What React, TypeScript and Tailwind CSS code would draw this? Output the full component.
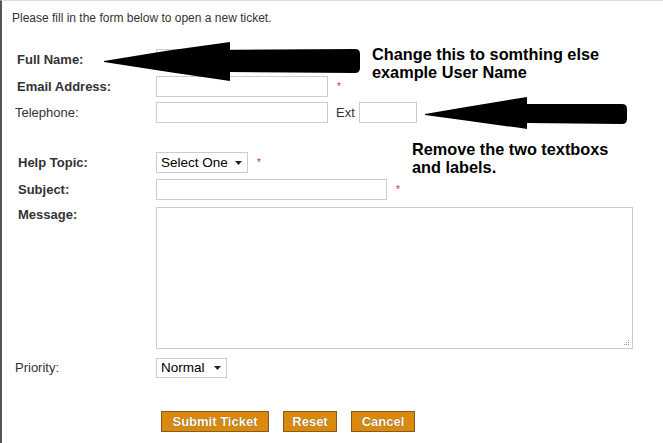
const label = 'text-[#333] text-[13px] font-bold leading-[16px]';
const plain = 'text-[#333] text-[13px] leading-[15px]';
const field = 'h-[21px] border border-[#ccc] bg-white';

function Star({ gap }: { gap: string }) {
  return <span className={`${gap} text-[#c33] text-[10px] leading-none`}>*</span>;
}

function Caret() {
  return (
    <svg width="7" height="4" viewBox="0 0 7 4" className="shrink-0">
      <path d="M0 0 H7 L3.5 4 Z" fill="#222" />
    </svg>
  );
}

function FakeSelect({ text, width, height = 'h-[21px]' }: { text: string; width: string; height?: string }) {
  return (
    <div className={`${width} ${height} border border-[#ccc] bg-white flex items-center justify-between pl-[4px] pr-[5px]`}>
      <span className="text-[13.5px] text-black leading-none">{text}</span>
      <Caret />
    </div>
  );
}

function Arrows() {
  return (
    <svg className="absolute inset-0 pointer-events-none" width="663" height="443" viewBox="0 0 663 443">
      <path
        d="M102 60 Q165 49 228 41 L228 49 L353 48 Q358 48 358 53 L358 67 Q358 72 353 72 L228 71 L228 80 Q165 71 102 61 Z"
        fill="#000"
      />
      <path
        d="M423 113 Q475 104 525 96 L525 103 L620 103 Q625 103 625 108 L625 118 Q625 123 620 123 L525 122 L525 128 Q475 121 423 114 Z"
        fill="#000"
      />
    </svg>
  );
}

function Grip() {
  return (
    <svg className="absolute right-[3px] bottom-[3px]" width="7" height="7" viewBox="0 0 7 7">
      {[
        [5, 1],
        [3, 3],
        [5, 3],
        [1, 5],
        [3, 5],
        [5, 5],
      ].map(([x, y]) => (
        <rect key={`${x}-${y}`} x={x} y={y} width="1" height="1" fill="#999" />
      ))}
    </svg>
  );
}

export default function App() {
  return (
    <div
      className="relative w-[663px] h-[443px] overflow-hidden bg-white border-l-2 border-l-[#555] border-t border-t-[#ddd]"
      style={{ fontFamily: '"Liberation Sans", Arial, sans-serif' }}
    >
      <p className="text-[#333] text-[12px] leading-[14px] pl-[10px] pt-[10px]">
        Please fill in the form below to open a new ticket.
      </p>

      <div className="flex flex-col">
        <div className="flex items-center h-[21px] mt-[24px]">
          <div className={`w-[154px] pl-[15px] ${label}`}>Full Name:</div>
          <div className={`${field} w-[172px]`} />
        </div>

        <div className="flex items-center h-[21px] mt-[6px]">
          <div className={`w-[154px] pl-[15px] ${label}`}>Email Address:</div>
          <div className={`${field} w-[172px]`} />
          <Star gap="ml-[9px]" />
        </div>

        <div className="flex items-center h-[21px] mt-[5px]">
          <div className={`w-[154px] pl-[13px] ${plain}`}>Telephone:</div>
          <div className={`${field} w-[172px]`} />
          <span className="ml-[8px] text-[13px] text-[#333] leading-none">Ext</span>
          <div className={`${field} w-[58px] ml-[4px]`} />
        </div>

        <div className="flex items-center h-[21px] mt-[29px]">
          <div className={`w-[154px] pl-[16px] ${label}`}>Help Topic:</div>
          <FakeSelect text="Select One" width="w-[92px]" />
          <Star gap="ml-[9px]" />
        </div>

        <div className="flex items-center h-[21px] mt-[6px]">
          <div className={`w-[154px] pl-[16px] ${label}`}>Subject:</div>
          <div className={`${field} w-[231px]`} />
          <Star gap="ml-[9px]" />
        </div>

        <div className="flex items-start mt-[7px]">
          <div className={`w-[154px] pl-[16px] ${label}`}>Message:</div>
          <div className="relative">
            <textarea className="block w-[477px] h-[142px] border border-[#ccc] bg-white resize-none outline-none" />
            <Grip />
          </div>
        </div>

        <div className="flex items-center h-[21px] mt-[8px]">
          <div className={`w-[154px] pl-[13px] ${plain}`}>Priority:</div>
          <FakeSelect text="Normal" width="w-[71px]" height="h-[20px]" />
        </div>

        <div className="flex items-center gap-[14px] mt-[33px] pl-[159px]">
          {[
            ['Submit Ticket', 'w-[108px]'],
            ['Reset', 'w-[54px]'],
            ['Cancel', 'w-[64px]'],
          ].map(([t, w]) => (
            <button
              key={t}
              className={`${w} h-[21px] bg-[#d98a0e] border border-[#8a5a18] text-white text-[13px] font-bold leading-none [text-shadow:0_0_1px_#6b4309]`}
            >
              {t}
            </button>
          ))}
        </div>
      </div>

      <Arrows />

      <div className="absolute left-[370px] top-[44px] text-[16.3px] font-bold leading-[18px] text-black">
        <div>Change this to somthing else</div>
        <div>example User Name</div>
      </div>
      <div className="absolute left-[410px] top-[139px] text-[16.3px] font-bold leading-[18px] text-black">
        <div>Remove the two textboxs</div>
        <div>and labels.</div>
      </div>
    </div>
  );
}
